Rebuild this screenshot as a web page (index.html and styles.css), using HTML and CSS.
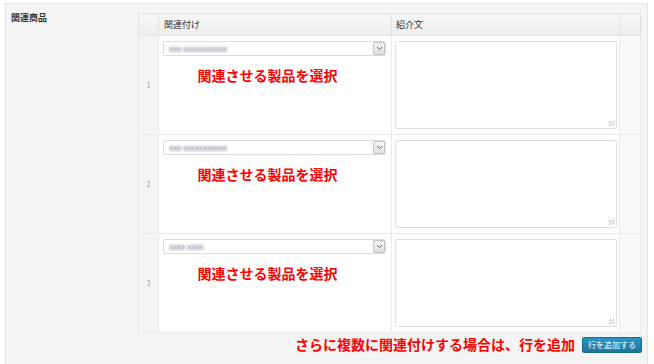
FILE: index.html
```html
<!DOCTYPE html>
<html lang="ja">
<head>
<meta charset="utf-8">
<link rel="stylesheet" href="styles.css">
</head>
<body>
<div class="panel">
  <div class="label">関連商品</div>
  <div class="field">
    <table class="rel">
      <thead>
        <tr>
          <th class="num"></th>
          <th class="c1">関連付け</th>
          <th class="c2">紹介文</th>
          <th class="act"></th>
        </tr>
      </thead>
      <tbody>
        <tr>
          <td class="num">1</td>
          <td class="c1">
            <div class="select"><span class="val">xxx-xxxxxxxxxxx</span><span class="arrow"><svg width="7" height="5" viewBox="0 0 7 5"><path d="M1 1 L3.5 3.5 L6 1" fill="none" stroke="#666" stroke-width="1"/></svg></span></div>
            <p class="note">関連させる製品を選択</p>
          </td>
          <td class="c2"><div class="ta"><span class="grip"></span></div></td>
          <td class="act"></td>
        </tr>
        <tr>
          <td class="num">2</td>
          <td class="c1">
            <div class="select"><span class="val">xxx-xxxxxxxxxxx</span><span class="arrow"><svg width="7" height="5" viewBox="0 0 7 5"><path d="M1 1 L3.5 3.5 L6 1" fill="none" stroke="#666" stroke-width="1"/></svg></span></div>
            <p class="note">関連させる製品を選択</p>
          </td>
          <td class="c2"><div class="ta"><span class="grip"></span></div></td>
          <td class="act"></td>
        </tr>
        <tr>
          <td class="num">3</td>
          <td class="c1">
            <div class="select"><span class="val">xxxx-xxxx</span><span class="arrow"><svg width="7" height="5" viewBox="0 0 7 5"><path d="M1 1 L3.5 3.5 L6 1" fill="none" stroke="#666" stroke-width="1"/></svg></span></div>
            <p class="note">関連させる製品を選択</p>
          </td>
          <td class="c2"><div class="ta"><span class="grip"></span></div></td>
          <td class="act"></td>
        </tr>
      </tbody>
    </table>
    <div class="footer">
      <span class="hint">さらに複数に関連付けする場合は、行を追加</span>
      <button class="add">行を追加する</button>
    </div>
  </div>
</div>
</body>
</html>
```

FILE: styles.css
```css
html, body {
  margin: 0;
  padding: 0;
  background: #ffffff;
  font-family: "Noto Sans CJK JP", "Noto Sans", sans-serif;
  color: #333;
}
.panel {
  margin: 3px 6px 0 5px;
  height: 361px;
  box-sizing: border-box;
  border: 1px solid #e4e4e4;
  border-bottom: none;
  background: #f4f4f4;
  display: flex;
}
.label {
  width: 132px;
  box-sizing: border-box;
  padding: 7px 0 0 5px;
  font-size: 9px;
  font-weight: bold;
  color: #333;
}
.field {
  padding-top: 9px;
  width: 503px;
}
.rel {
  border-collapse: collapse;
  width: 503px;
  table-layout: fixed;
  border: 1px solid #e1e1e1;
  background: #fff;
}
.rel th {
  height: 21px;
  padding: 0 5px;
  text-align: left;
  font-size: 9px;
  font-weight: normal;
  color: #333;
  background: linear-gradient(#f7f7f7, #ededed);
  border: 1px solid #e1e1e1;
}
.rel td {
  border: 1px solid #eaeaea;
  vertical-align: top;
  height: 99px;
  box-sizing: border-box;
}
.rel th.num { width: 19px; padding: 0; }
.rel th.act { width: 20px; padding: 0; }
.rel th.c1 { width: 233px; box-sizing: border-box; }
.rel th.c2 { padding-left: 4px; }
.rel td.num {
  background: #f4f4f4;
  color: #999;
  font-size: 7px;
  text-align: center;
  vertical-align: middle;
  padding: 0;
}
.rel td.act {
  background: #f9f9f9;
}
.rel td.c1 {
  padding: 5px 5px 0 4px;
}
.rel td.c2 {
  padding: 5px 2px 0 3px;
}
.select {
  height: 15px;
  border: 1px solid #dcdcdc;
  border-radius: 2px;
  background: #fff;
  display: flex;
  align-items: center;
  justify-content: space-between;
  box-sizing: border-box;
}
.val {
  padding-left: 5px;
  font-size: 8px;
  color: #6f6f88;
  filter: blur(0.8px);
}
.arrow {
  width: 12px;
  height: 13px;
  margin-right: 0;
  border: 1px solid #c4c4c4;
  border-radius: 2px;
  background: linear-gradient(#f4f4f4, #e0e0e0);
  box-sizing: border-box;
  display: flex;
  align-items: center;
  justify-content: center;
}
.note {
  margin: 9px 0 0;
  padding-right: 14px;
  text-align: center;
  font-size: 14px;
  font-weight: bold;
  color: #ff0000;
  line-height: 20px;
}
.ta {
  height: 88px;
  border: 1px solid #dfdfdf;
  border-radius: 2px;
  background: #fff;
  position: relative;
  box-sizing: border-box;
}
.grip {
  position: absolute;
  right: 2px;
  bottom: 2px;
  width: 5px;
  height: 5px;
  background: repeating-linear-gradient(135deg, transparent 0 1px, #b8b8b8 1px 2px);
}
.footer {
  display: flex;
  justify-content: flex-end;
  align-items: center;
  gap: 7px;
  margin-top: 3px;
  margin-right: -1px;
}
.hint {
  font-size: 14px;
  font-weight: bold;
  color: #ff0000;
  line-height: 20px;
  margin-top: -2px;
}
.add {
  width: 60px;
  height: 16px;
  padding: 0;
  font-family: "Noto Sans CJK JP", sans-serif;
  font-size: 8px;
  color: #fff;
  background: linear-gradient(#2a95c5, #21759b);
  border: 1px solid #1e6a8d;
  border-radius: 2px;
  line-height: 14px;
}
```
